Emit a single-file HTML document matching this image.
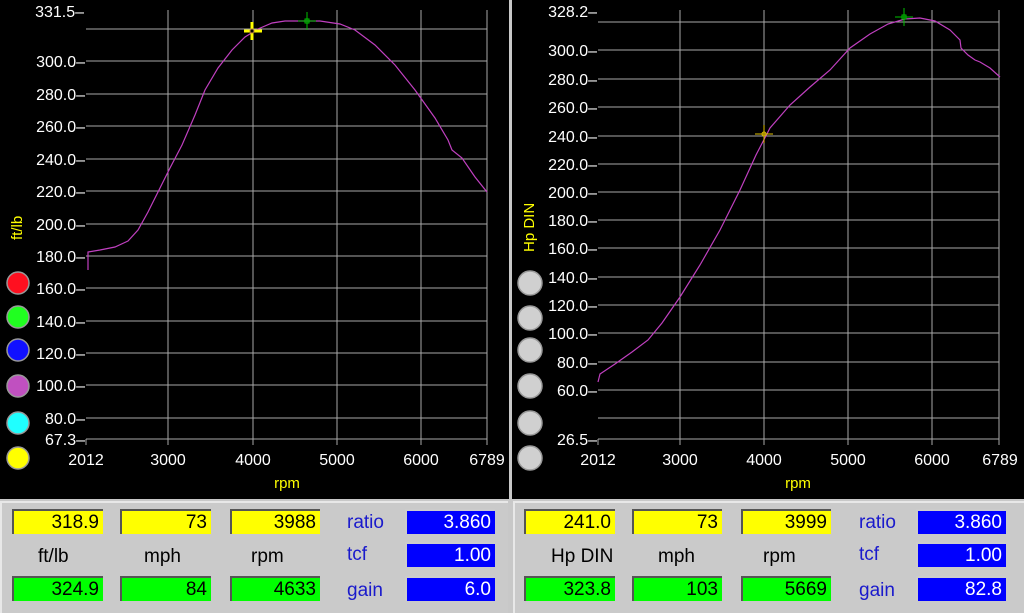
<!DOCTYPE html>
<html><head><style>
body{margin:0;width:1024px;height:613px;background:#c8c8c8;position:relative;overflow:hidden;font-family:"Liberation Sans",sans-serif}
.p{position:absolute;top:0;height:499px;background:#000}
.bp{position:absolute;top:501px;height:112px;background:#cacaca;border-top:2px solid #e8e8e8;border-left:2px solid #e8e8e8;box-sizing:border-box}
.b{position:absolute;height:25px;box-sizing:border-box;border-top:2px solid #555;border-left:2px solid #555;font-size:19px;text-align:right;padding-right:4px;line-height:23px;color:#000}
.y{background:#ffff00}.g{background:#00ff00}.bl{background:#0000ff;color:#fff;border-color:#ccc}
.l{position:absolute;font-size:19px;color:#000}
.lb{position:absolute;font-size:19px;color:#1a1acc}
</style></head><body>
<div class="p" style="left:0;width:509px"></div>
<div class="p" style="left:512px;width:512px"></div>
<svg width="1024" height="499" style="position:absolute;left:0;top:0" font-family="Liberation Sans" font-size="16">
<g stroke="#a8a8a8" stroke-width="1">
<line x1="86" x2="487" y1="29" y2="29"/><line x1="86" x2="487" y1="61" y2="61"/><line x1="86" x2="487" y1="94" y2="94"/><line x1="86" x2="487" y1="126" y2="126"/><line x1="86" x2="487" y1="159" y2="159"/><line x1="86" x2="487" y1="191" y2="191"/><line x1="86" x2="487" y1="224" y2="224"/><line x1="86" x2="487" y1="256" y2="256"/><line x1="86" x2="487" y1="288" y2="288"/><line x1="86" x2="487" y1="321" y2="321"/><line x1="86" x2="487" y1="353" y2="353"/><line x1="86" x2="487" y1="385" y2="385"/><line x1="86" x2="487" y1="418" y2="418"/><line x1="86" x2="487" y1="439" y2="439"/>
<line x1="168" x2="168" y1="10" y2="445"/><line x1="253" x2="253" y1="10" y2="445"/><line x1="337" x2="337" y1="10" y2="445"/><line x1="421" x2="421" y1="10" y2="445"/><line x1="487" x2="487" y1="10" y2="445"/><line x1="86" x2="86" y1="439" y2="445"/>
<line x1="598" x2="999" y1="22" y2="22"/><line x1="598" x2="999" y1="50" y2="50"/><line x1="598" x2="999" y1="79" y2="79"/><line x1="598" x2="999" y1="107" y2="107"/><line x1="598" x2="999" y1="136" y2="136"/><line x1="598" x2="999" y1="164" y2="164"/><line x1="598" x2="999" y1="192" y2="192"/><line x1="598" x2="999" y1="220" y2="220"/><line x1="598" x2="999" y1="248" y2="248"/><line x1="598" x2="999" y1="277" y2="277"/><line x1="598" x2="999" y1="305" y2="305"/><line x1="598" x2="999" y1="333" y2="333"/><line x1="598" x2="999" y1="362" y2="362"/><line x1="598" x2="999" y1="390" y2="390"/><line x1="598" x2="999" y1="418" y2="418"/><line x1="598" x2="999" y1="439" y2="439"/>
<line x1="680" x2="680" y1="10" y2="445"/><line x1="764" x2="764" y1="10" y2="445"/><line x1="848" x2="848" y1="10" y2="445"/><line x1="932" x2="932" y1="10" y2="445"/><line x1="999" x2="999" y1="10" y2="445"/><line x1="598" x2="598" y1="439" y2="445"/>
</g>
<g fill="#fff" text-anchor="end">
<text x="84" y="17">331.5–</text><text x="85" y="67">300.0–</text><text x="85" y="100">280.0–</text><text x="85" y="132">260.0–</text><text x="85" y="165">240.0–</text><text x="85" y="197">220.0–</text><text x="85" y="230">200.0–</text><text x="85" y="262">180.0–</text><text x="85" y="294">160.0–</text><text x="85" y="327">140.0–</text><text x="85" y="359">120.0–</text><text x="85" y="391">100.0–</text><text x="85" y="424">80.0–</text><text x="85" y="445">67.3–</text>
<text x="597" y="17">328.2–</text><text x="597" y="56">300.0–</text><text x="597" y="85">280.0–</text><text x="597" y="113">260.0–</text><text x="597" y="142">240.0–</text><text x="597" y="170">220.0–</text><text x="597" y="198">200.0–</text><text x="597" y="226">180.0–</text><text x="597" y="254">160.0–</text><text x="597" y="283">140.0–</text><text x="597" y="311">120.0–</text><text x="597" y="339">100.0–</text><text x="597" y="368">80.0–</text><text x="597" y="396">60.0–</text><text x="597" y="445">26.5–</text>
</g>
<g fill="#fff" text-anchor="middle">
<text x="86" y="465">2012</text><text x="168" y="465">3000</text><text x="253" y="465">4000</text><text x="337" y="465">5000</text><text x="421" y="465">6000</text><text x="487" y="465">6789</text>
<text x="598" y="465">2012</text><text x="680" y="465">3000</text><text x="764" y="465">4000</text><text x="848" y="465">5000</text><text x="932" y="465">6000</text><text x="1000" y="465">6789</text>
</g>
<g fill="#ffff00" font-size="15">
<text x="287" y="488" text-anchor="middle">rpm</text><text x="798" y="488" text-anchor="middle">rpm</text>
<text transform="translate(22,240) rotate(-90)">ft/lb</text>
<text transform="translate(534,252) rotate(-90)">Hp DIN</text>
</g>
<polyline fill="none" stroke="#c040c0" stroke-width="1.2" points="88,270 88,252 100,250 115,247 128,241 138,230 148,212 158,192 170,168 182,145 195,115 205,90 218,68 232,50 245,37 258,29 272,23 285,21 300,21 320,21 340,24 355,30 375,45 395,65 415,90 435,118 448,140 452,150 462,158 475,177 487,192"/>
<polyline fill="none" stroke="#c040c0" stroke-width="1.2" points="598,382 600,374 615,364 632,352 648,340 662,323 680,297 700,265 720,230 740,190 756,155 770,128 790,105 810,87 830,70 850,48 870,34 888,24 905,19 920,18 935,21 950,30 960,40 961,48 968,55 975,60 980,62 990,68 1000,77"/>
<g stroke="#ffff00" stroke-width="3"><line x1="244" x2="262" y1="31" y2="31"/><line x1="252" x2="252" y1="22" y2="40"/></g>
<circle cx="252" cy="31" r="2" fill="#000" stroke="#c08040"/>
<g stroke="#00c000" stroke-width="1"><line x1="298" x2="316" y1="21" y2="21"/><line x1="307" x2="307" y1="12" y2="30"/></g><rect x="305" y="19" width="4" height="4" fill="none" stroke="#00c000"/>
<g stroke="#e0c000" stroke-width="1"><line x1="755" x2="773" y1="134" y2="134"/><line x1="764" x2="764" y1="125" y2="143"/></g><circle cx="764" cy="134" r="2" fill="none" stroke="#e0c000"/>
<g stroke="#00c000" stroke-width="1"><line x1="895" x2="913" y1="17" y2="17"/><line x1="904" x2="904" y1="8" y2="26"/></g><rect x="902" y="15" width="4" height="4" fill="none" stroke="#00c000"/>
<g stroke="#999" stroke-width="1.5">
<circle cx="18" cy="283" r="11" fill="#ff1020"/><circle cx="18" cy="317" r="11" fill="#20ff20"/><circle cx="18" cy="350" r="11" fill="#1010ff"/><circle cx="18" cy="386" r="11" fill="#c050c0"/><circle cx="18" cy="423" r="11" fill="#20ffff"/><circle cx="18" cy="458" r="11" fill="#ffff00"/>
</g>
<g stroke="#999" stroke-width="1.5" fill="#d0d0d0">
<circle cx="530" cy="283" r="12"/><circle cx="530" cy="318" r="12"/><circle cx="530" cy="350" r="12"/><circle cx="530" cy="386" r="12"/><circle cx="530" cy="423" r="12"/><circle cx="530" cy="458" r="12"/>
</g>
</svg>
<div class="bp" style="left:0;width:508px"></div>
<div class="bp" style="left:513px;width:511px"></div>
<div class="b y" style="left:12px;top:509px;width:91px">318.9</div>
<div class="b y" style="left:120px;top:509px;width:91px">73</div>
<div class="b y" style="left:230px;top:509px;width:90px">3988</div>
<div class="b bl" style="left:405px;top:509px;width:90px">3.860</div>
<div class="b bl" style="left:405px;top:542px;width:90px">1.00</div>
<div class="b g" style="left:12px;top:576px;width:91px">324.9</div>
<div class="b g" style="left:120px;top:576px;width:91px">84</div>
<div class="b g" style="left:230px;top:576px;width:90px">4633</div>
<div class="b bl" style="left:405px;top:576px;width:90px">6.0</div>
<div class="l" style="left:38px;top:546px">ft/lb</div>
<div class="l" style="left:144px;top:546px">mph</div>
<div class="l" style="left:251px;top:546px">rpm</div>
<div class="lb" style="left:347px;top:512px">ratio</div>
<div class="lb" style="left:347px;top:544px">tcf</div>
<div class="lb" style="left:347px;top:580px">gain</div>

<div class="b y" style="left:524px;top:509px;width:91px">241.0</div>
<div class="b y" style="left:632px;top:509px;width:90px">73</div>
<div class="b y" style="left:741px;top:509px;width:90px">3999</div>
<div class="b bl" style="left:916px;top:509px;width:90px">3.860</div>
<div class="b bl" style="left:916px;top:542px;width:90px">1.00</div>
<div class="b g" style="left:524px;top:576px;width:91px">323.8</div>
<div class="b g" style="left:632px;top:576px;width:90px">103</div>
<div class="b g" style="left:741px;top:576px;width:90px">5669</div>
<div class="b bl" style="left:916px;top:576px;width:90px">82.8</div>
<div class="l" style="left:551px;top:546px">Hp DIN</div>
<div class="l" style="left:658px;top:546px">mph</div>
<div class="l" style="left:763px;top:546px">rpm</div>
<div class="lb" style="left:859px;top:512px">ratio</div>
<div class="lb" style="left:859px;top:544px">tcf</div>
<div class="lb" style="left:859px;top:580px">gain</div>
</body></html>
